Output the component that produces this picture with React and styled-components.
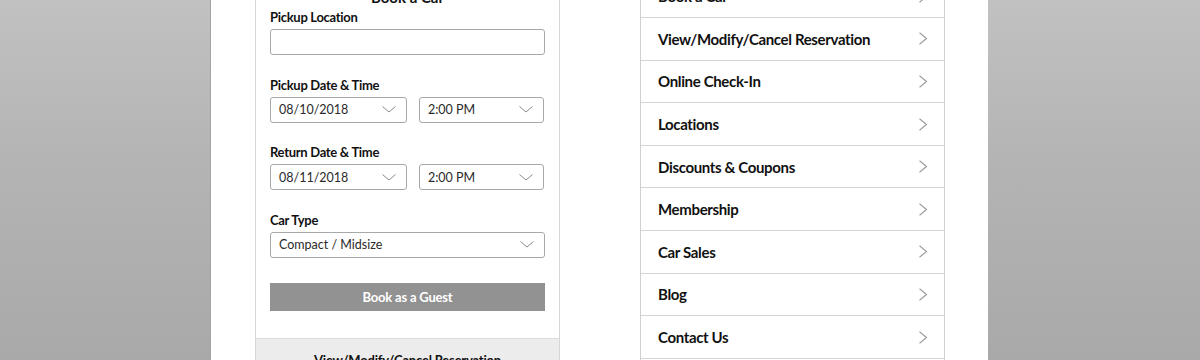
import React from 'react';
import styled, { createGlobalStyle } from 'styled-components';

const GlobalStyle = createGlobalStyle`
  html, body {
    margin: 0;
    padding: 0;
  }
  body {
    font-family: Lato, "Open Sans", "Liberation Sans", sans-serif;
    background: linear-gradient(to bottom, #c1c1c1 0%, #b4b4b4 45%, #a9a9a9 100%);
    height: 360px;
    overflow: hidden;
  }
`;

const Stage = styled.div`
  display: flex;
  padding-left: 211px;
  height: 360px;
`;

const Sheet = styled.div`
  width: 777px;
  background: #fff;
  padding: 0 43px 0 44px;
  box-sizing: border-box;
  box-shadow: -1px 0 0 #a4a4a4;
  overflow: hidden;
`;

const Columns = styled.div`
  display: grid;
  grid-template-columns: 305px 305px;
  column-gap: 80px;
  align-items: start;
  margin-top: -25px;
`;

const Card = styled.section`
  border-left: 1px solid #d6d6d6;
  border-right: 1px solid #d6d6d6;
  background: #fff;
`;

const CardBody = styled.div`
  padding: 12px 14px 27px 14px;
`;

const CardTitle = styled.h2`
  margin: 0 0 2px;
  font-size: 15px;
  line-height: 20px;
  font-weight: 700;
  text-align: center;
  color: #111;
`;

const Field = styled.div`
  margin-bottom: ${p => (p.$last ? '25.5px' : '21.5px')};
`;

const Label = styled.div`
  font-size: 13px;
  line-height: 16px;
  font-weight: 700;
  letter-spacing: -0.3px;
  color: #111;
  margin-bottom: 4px;
`;

const TextInput = styled.div`
  height: 26px;
  box-sizing: border-box;
  border: 1px solid #a8a8a8;
  border-radius: 3px;
  background: #fff;
`;

const Pair = styled.div`
  display: grid;
  grid-template-columns: 137px 125px;
  column-gap: 12px;
`;

const Select = styled.div`
  height: 26px;
  box-sizing: border-box;
  border: 1px solid #a8a8a8;
  border-radius: 3px;
  background: #fff;
  display: flex;
  align-items: center;
  justify-content: space-between;
  padding: 0 10px 0 8px;
  font-size: 12.5px;
  color: #2a2a2a;
`;

const PrimaryButton = styled.div`
  height: 28px;
  background: #929292;
  color: #fff;
  font-size: 13px;
  font-weight: 700;
  letter-spacing: -0.2px;
  display: flex;
  align-items: center;
  justify-content: center;
`;

const CardFooter = styled.div`
  background: #ececec;
  border-top: 1px solid #dcdcdc;
  padding-top: 13px;
  height: 40px;
  text-align: center;
  font-size: 13px;
  font-weight: 700;
  letter-spacing: -0.2px;
  color: #111;
`;

const MenuList = styled.nav`
  border-left: 1px solid #d0d0d0;
  border-right: 1px solid #d0d0d0;
  margin-top: 0.5px;
`;

const MenuRow = styled.div`
  height: 42.6px;
  box-sizing: border-box;
  border-bottom: 1.5px solid #d4d4d4;
  display: flex;
  align-items: center;
  justify-content: space-between;
  padding: 0 16px 0 17px;
  font-size: 15px;
  font-weight: 700;
  letter-spacing: -0.35px;
  color: #111;
`;

const Caret = () => (
  <svg width="14" height="7" viewBox="0 0 14 7" fill="none">
    <path d="M0.5 0.5 L7 6 L13.5 0.5" stroke="#8a8a8a" strokeWidth="1" />
  </svg>
);

const Chevron = () => (
  <svg width="10" height="13" viewBox="0 0 10 13" fill="none">
    <path d="M1.5 0.8 L8.5 6.5 L1.5 12.2" stroke="#9a9a9a" strokeWidth="1.1" />
  </svg>
);

const SelectBox = ({ value }) => (
  <Select>
    <span>{value}</span>
    <Caret />
  </Select>
);

const menuItems = [
  'Book a Car',
  'View/Modify/Cancel Reservation',
  'Online Check-In',
  'Locations',
  'Discounts & Coupons',
  'Membership',
  'Car Sales',
  'Blog',
  'Contact Us',
  'About Us',
];

export default function App() {
  return (
    <>
      <GlobalStyle />
      <Stage>
        <Sheet>
          <Columns>
            <Card>
              <CardBody>
                <CardTitle>Book a Car</CardTitle>
                <Field>
                  <Label>Pickup Location</Label>
                  <TextInput />
                </Field>
                <Field>
                  <Label>Pickup Date &amp; Time</Label>
                  <Pair>
                    <SelectBox value="08/10/2018" />
                    <SelectBox value="2:00 PM" />
                  </Pair>
                </Field>
                <Field>
                  <Label>Return Date &amp; Time</Label>
                  <Pair>
                    <SelectBox value="08/11/2018" />
                    <SelectBox value="2:00 PM" />
                  </Pair>
                </Field>
                <Field $last>
                  <Label>Car Type</Label>
                  <SelectBox value="Compact / Midsize" />
                </Field>
                <PrimaryButton>Book as a Guest</PrimaryButton>
              </CardBody>
              <CardFooter>View/Modify/Cancel Reservation</CardFooter>
            </Card>

            <MenuList>
              {menuItems.map(item => (
                <MenuRow key={item}>
                  <span>{item}</span>
                  <Chevron />
                </MenuRow>
              ))}
            </MenuList>
          </Columns>
        </Sheet>
      </Stage>
    </>
  );
}
